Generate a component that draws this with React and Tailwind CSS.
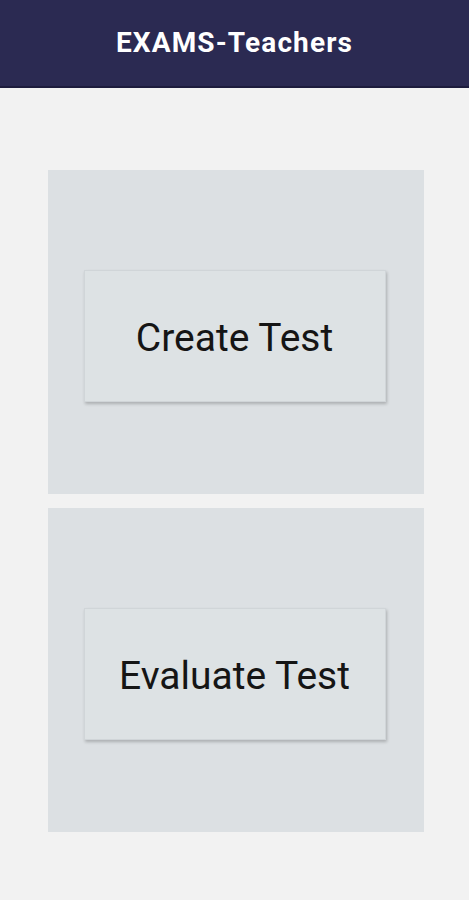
import React from 'react';

function ActionCard({ label }) {
  return (
    <div className="bg-[#dce0e3] h-[324px] flex items-center justify-center pt-[8px] pr-[3px]">
      <button className="w-[302px] h-[132px] bg-[#dde2e4] border border-[#d0d5d8] shadow-[1px_2px_3px_rgba(0,0,0,0.22)] text-[39px] leading-none pt-[4px] text-[#151515] font-['Roboto',sans-serif]">
        {label}
      </button>
    </div>
  );
}

export default function App() {
  return (
    <div className="min-h-[900px] bg-[#f2f2f2] font-['Roboto',sans-serif]">
      {/* Top bar */}
      <header className="h-[88px] bg-[#2b2a52] border-b-2 border-[#1d1c3d] flex items-center justify-center">
        <h1 className="text-white text-[28px] font-bold tracking-[0.04em]">EXAMS-Teachers</h1>
      </header>

      <div className="ml-[48px] w-[376px] pt-[82px] flex flex-col gap-[14px]">
        <ActionCard label="Create Test" />
        <ActionCard label="Evaluate Test" />
      </div>
    </div>
  );
}
